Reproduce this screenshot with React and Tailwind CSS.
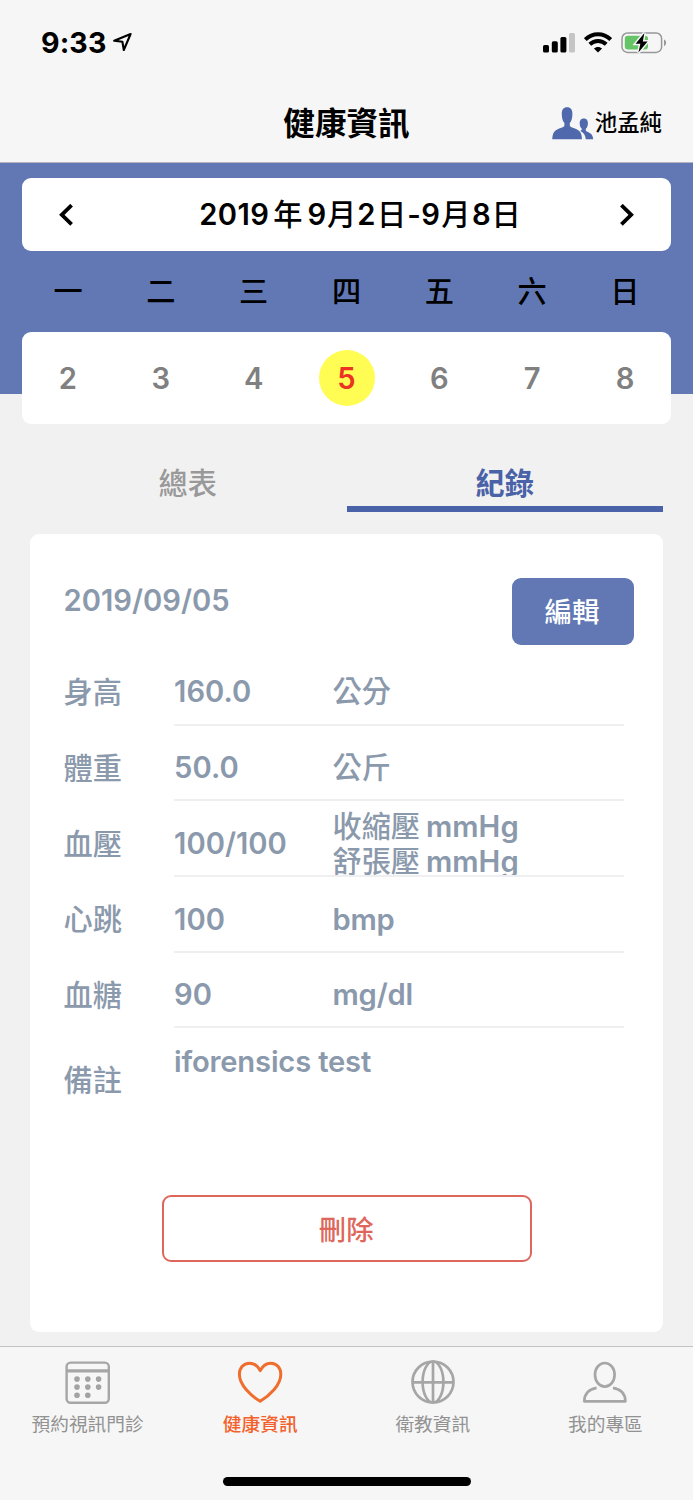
import clsx from 'clsx';

const weekdays = ['一', '二', '三', '四', '五', '六', '日'];
const days = [2, 3, 4, 5, 6, 7, 8];
const selectedDay = 5;

const records = [
  { label: '身高', value: '160.0', unit: '公分' },
  { label: '體重', value: '50.0', unit: '公斤' },
  { label: '血壓', value: '100/100', units: ['收縮壓', '舒張壓'] },
  { label: '心跳', value: '100', unit: 'bmp' },
  { label: '血糖', value: '90', unit: 'mg/dl' },
];

const StatusBar = () => (
  <div className="flex h-[84px] items-center justify-between pl-[41px] pr-[26px]">
    <div className="flex items-center gap-[6px]">
      <span className="pt-[2px] text-[28.6px] font-bold leading-none tracking-[0.1px] text-black">9:33</span>
      <svg width="20" height="20" viewBox="0 0 20 20" fill="none" stroke="#000" strokeWidth="2.1" strokeLinejoin="round">
        <path d="M18.6 2L2.2 8.8L10.4 9.8L11.8 18Z" />
      </svg>
    </div>
    <div className="flex items-center pt-px">
      {/* Sinyal */}
      <svg width="32" height="22" viewBox="0 0 32 22">
        <rect x="0" y="13" width="6" height="7.5" rx="1.6" />
        <rect x="8.8" y="9.3" width="6" height="11.2" rx="1.6" />
        <rect x="17.4" y="5" width="6" height="15.5" rx="1.6" />
        <rect x="26" y="1" width="6" height="19.5" rx="1.6" fill="#c5c5c5" />
      </svg>
      <svg className="ml-[9px]" width="28" height="22" viewBox="0 0 28 22" fill="none" stroke="#000" strokeWidth="4">
        <path d="M1.3 7.6C8.5 0.6 19.5 0.6 26.7 7.6" />
        <path d="M5.8 12.2C10.5 7.8 17.5 7.8 22.2 12.2" />
        <path d="M14 20.6L9.9 16.5C12.2 14.4 15.8 14.4 18.1 16.5Z" fill="#000" stroke="none" />
      </svg>
      <svg className="ml-[9px]" width="46" height="24" viewBox="0 0 46 24">
        <rect x="1" y="2" width="39.6" height="19.4" rx="5.5" fill="none" stroke="#98989b" strokeWidth="1.5" />
        <rect x="3.8" y="4.8" width="23.2" height="13.8" rx="3" fill="#65c466" />
        <path d="M43 8.6C45.8 9.8 45.8 14 43 15.2Z" fill="#98989b" />
        <path d="M23.4 2L14.6 12.8H19.4L17.4 21.6L26.6 10.6H21.8Z" fill="#000" stroke="#f6f6f6" strokeWidth="3" paintOrder="stroke" />
      </svg>
    </div>
  </div>
);

const UserIcon = () => (
  <svg width="42" height="33" viewBox="0 0 42 33" fill="#5068ac">
    <path d="M15.1.3C18.8.3 20.5 3 20.4 7C20.4 11.4 19.4 14.3 17.8 16V18.8C18.4 20.6 21.6 20.8 24.6 22.2C28.2 23.8 29.8 26.6 30 32.2H.3C.5 26.6 2 23.8 5.6 22.2C8.6 20.8 11.8 20.6 12.4 18.8V16C10.8 14.3 9.8 11.4 9.8 7C9.7 3 11.4.3 15.1.3Z" />
    <path d="M31.8 11.4C34.8 11.4 36 13.6 35.9 16.4C35.8 19 35 20.6 33.8 21.8V23.8C34.8 25.6 40.8 25 41.2 32.2H33.8C33.4 28 31.4 25.2 28.2 24C29.4 23.4 29.9 22.8 29.9 21.8C28.6 20.6 27.8 19 27.7 16.4C27.6 13.6 28.8 11.4 31.8 11.4Z" />
  </svg>
);

const CalendarIcon = () => (
  <svg width="46" height="44" viewBox="0 0 46 44" fill="none" stroke="#a6a6a6">
    <rect x="1.6" y="1.6" width="42.2" height="40.2" rx="4" strokeWidth="2.4" />
    <path d="M2 9.8H44" strokeWidth="3.2" />
    <g fill="#a3a3a3" stroke="none">
      <circle cx="12" cy="18.1" r="2.8" />
      <circle cx="22.8" cy="18.1" r="2.8" />
      <circle cx="33.6" cy="18.1" r="2.8" />
      <circle cx="12" cy="26.1" r="2.8" />
      <circle cx="22.8" cy="26.1" r="2.8" />
      <circle cx="33.6" cy="26.1" r="2.8" />
      <circle cx="12" cy="34.2" r="2.8" />
      <circle cx="22.8" cy="34.2" r="2.8" />
    </g>
  </svg>
);

const HeartIcon = () => (
  <svg width="46" height="44" viewBox="0 0 46 44" fill="none" stroke="#ef6d2d" strokeWidth="3" strokeLinejoin="round">
    <path d="M23.2 9.6C20.5 4.6 17 2.2 12.7 2.2C6 2.2 2.4 7.2 2.4 13.5C2.4 24 14 35 23.2 40.2C32.4 35 43.8 24 43.8 13.5C43.8 7.2 40.2 2.2 33.6 2.2C29.2 2.2 25.8 4.6 23.2 9.6Z" />
  </svg>
);

const GlobeIcon = () => (
  <svg className="overflow-visible" width="46" height="44" viewBox="0 0 46 44" fill="none" stroke="#a6a6a6" strokeWidth="2.7">
    <circle cx="23" cy="21" r="20.5" />
    <ellipse cx="23" cy="21" rx="10.4" ry="20.5" />
    <path d="M2.4 21.4H43.6M23 .6V41.4" />
  </svg>
);

const PersonIcon = () => (
  <svg width="46" height="44" viewBox="0 0 46 44" fill="none" stroke="#a6a6a6" strokeWidth="2.7">
    <ellipse cx="22.8" cy="13.8" rx="9.8" ry="11.8" />
    <path d="M14.6 26.8C7 28 2.3 33 2.3 40.3H43.4C43.4 33 38.8 28 31 26.8" strokeLinejoin="round" />
  </svg>
);

const tabs = [
  { label: '預約視訊門診', Icon: CalendarIcon },
  { label: '健康資訊', Icon: HeartIcon, active: true },
  { label: '衛教資訊', Icon: GlobeIcon },
  { label: '我的專區', Icon: PersonIcon },
];

const RecordRow = ({ label, value, unit, units }) => (
  <div className="flex h-[75.7px] items-center">
    <span className="w-[110px] shrink-0 pt-[10px] font-medium">{label}</span>
    <div className="flex h-full w-[450px] items-center border-b-2 border-[#efeff1] pt-[10.5px]">
      <span className="w-[159px] shrink-0 pl-[0.6px]">{value}</span>
      {units ? (
        <div className="h-[66px] self-end overflow-hidden leading-[35px]">
          {units.map((name) => (
            <div key={name} className="flex h-[35px] gap-[6px]">
              <span className="font-medium">{name}</span>
              <span>mmHg</span>
            </div>
          ))}
        </div>
      ) : (
        <span className={clsx(unit.startsWith('公') ? 'font-medium' : 'tracking-[-0.2px]')}>{unit}</span>
      )}
    </div>
  </div>
);

export default function App() {
  return (
    <div className="flex h-[1500px] w-[693px] flex-col overflow-hidden bg-[#f1f1f1] font-['Inter','Noto_Sans_CJK_TC',sans-serif] text-[29.2px] font-semibold leading-none">
      <header className="h-[163px] shrink-0 border-b border-[#b4b4ba] bg-[#f6f6f6]">
        <StatusBar />
        <div className="grid h-[78px] grid-cols-[1fr_auto_1fr] items-center">
          <span className="col-start-2 pt-px text-[31.6px] font-bold text-black">健康資訊</span>
          <div className="flex items-center justify-end gap-px pr-[31px]">
            <UserIcon />
            <span className="text-[22.4px] font-medium text-black">池孟純</span>
          </div>
        </div>
      </header>

      {/* Hafta seçici */}
      <section className="h-[231px] shrink-0 bg-[#6178b4] px-[22.4px] pt-[15px]">
        <div className="flex h-[73px] items-center justify-between rounded-[9px] bg-white pl-[37px] pr-[37px] text-black">
          <svg width="14" height="22" viewBox="0 0 14 22" fill="none" stroke="#000" strokeWidth="3.8">
            <path d="M12.6 1.2L2.8 10.8L12.6 20.4" />
          </svg>
          <div className="ml-[28px] flex items-center whitespace-pre pt-px">
            <span className="tracking-[0.4px]">2019</span>
            <span className="ml-[4px] mr-[5px] font-medium">年</span>
            <span>9</span>
            <span className="mx-px font-medium">月</span>
            <span>2</span>
            <span className="ml-[1.5px] mr-px font-medium">日</span>
            <span className="tracking-[0.4px]">-9</span>
            <span className="ml-px mr-[1.5px] font-medium">月</span>
            <span>8</span>
            <span className="mx-px font-medium">日</span>
          </div>
          <svg width="14" height="22" viewBox="0 0 14 22" fill="none" stroke="#000" strokeWidth="3.8">
            <path d="M1.4 1.2L11.2 10.8L1.4 20.4" />
          </svg>
        </div>
        <div className="grid h-[81px] grid-cols-[repeat(7,92.8px)] items-center justify-center text-center font-medium text-black">
          {weekdays.map((day) => (
            <span key={day}>{day}</span>
          ))}
        </div>
        <div className="grid h-[91.5px] grid-cols-[repeat(7,92.9px)] items-center justify-center justify-items-center rounded-[9px] bg-white text-[#808080]">
          {days.map((day) => (
            <span
              key={day}
              className={clsx(
                'flex size-[56px] items-center justify-center rounded-full pt-px',
                day === selectedDay && 'bg-[#fffd54] text-[#ea3323]'
              )}
            >
              {day}
            </span>
          ))}
        </div>
      </section>

      <div className="mx-[30px] mt-[60px] grid h-[58px] shrink-0 grid-cols-2 text-center">
        <div className="pr-px pt-[15px] font-medium text-[#999999]">總表</div>
        <div className="border-b-[6px] border-[#4a62a8] pt-[15px] font-bold text-[#4a62a8]">紀錄</div>
      </div>

      <section className="mx-[30px] mt-[22px] h-[798px] shrink-0 rounded-[9px] bg-white pl-[33.5px] pr-[29px] text-[#8b99ac]">
        <div className="flex h-[116px] justify-between pt-[44px]">
          <span className="pt-[8px]">2019/09/05</span>
          <button className="h-[67px] w-[122px] rounded-[9px] bg-[#6178b4] pr-[2px] pt-[2px] text-[27.4px] font-medium text-white">編輯</button>
        </div>
        {records.map((record) => (
          <RecordRow key={record.label} {...record} />
        ))}
        <div className="flex h-[167px]">
          <span className="w-[110px] pt-[38px] font-medium">備註</span>
          <span className="pl-[0.5px] pt-[19px] tracking-[-0.18px]">iforensics test</span>
        </div>
        <button className="ml-[98.5px] h-[67px] w-[369.5px] rounded-[9px] border-2 border-[#de675c] pr-px pt-[3px] text-[27.4px] font-medium text-[#de675c]">刪除</button>
      </section>

      <nav className="mt-[14px] flex h-[154px] shrink-0 flex-col items-center border-t border-[#c3c3c3] bg-[#f6f6f6]">
        <div className="grid h-[130px] w-full grid-cols-[repeat(4,172.6px)] justify-center">
          {tabs.map(({ label, Icon, active }) => (
            <div key={label} className="flex flex-col items-center gap-[11px] pt-[14px]">
              <Icon />
              <span className={clsx('text-[18.7px]', active ? 'font-medium text-[#f2622a]' : 'font-normal text-[#929292]')}>
                {label}
              </span>
            </div>
          ))}
        </div>
        <div className="h-[9px] w-[248px] rounded-full bg-black" />
      </nav>
    </div>
  );
}
